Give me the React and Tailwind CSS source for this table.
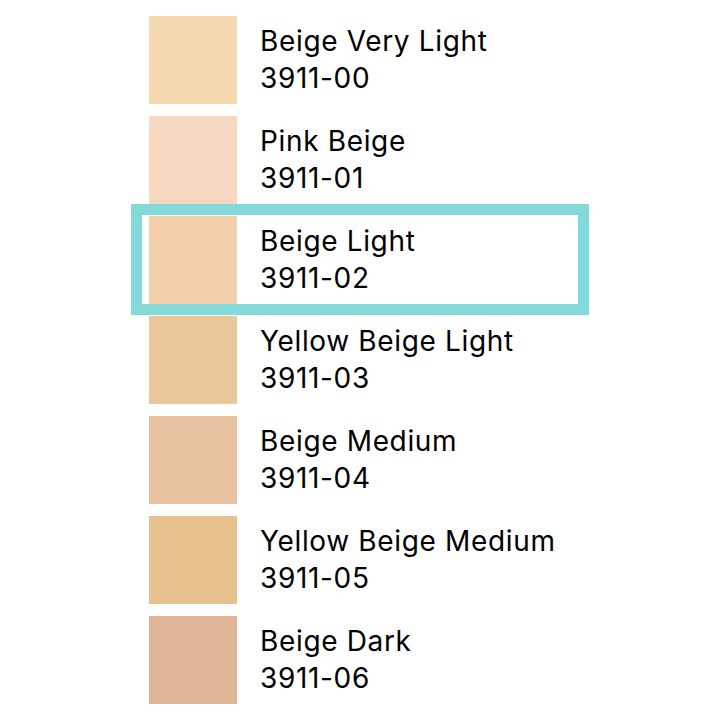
const shades = [
  { name: 'Beige Very Light', code: '3911-00', color: 'bg-[#f5d9b1]' },
  { name: 'Pink Beige', code: '3911-01', color: 'bg-[#f7d8c1]' },
  { name: 'Beige Light', code: '3911-02', color: 'bg-[#f3cfab]', selected: true },
  { name: 'Yellow Beige Light', code: '3911-03', color: 'bg-[#eac79b]' },
  { name: 'Beige Medium', code: '3911-04', color: 'bg-[#e9c2a1]' },
  { name: 'Yellow Beige Medium', code: '3911-05', color: 'bg-[#e6c08d]' },
  { name: 'Beige Dark', code: '3911-06', color: 'bg-[#e0b597]' },
];

export default function App() {
  return (
    <div className="w-[720px] h-[720px] bg-white pt-[16px] pl-[149px] font-['Inter',sans-serif] text-black">
      <div className="flex flex-col gap-[12px]">
        {shades.map((shade) => (
          <div key={shade.code} className="relative flex items-center gap-[23px] h-[88px]">
            {shade.selected && (
              <div className="absolute left-[-18px] top-[-12px] w-[458px] h-[111px] border-[11px] border-[#84d9db]" />
            )}
            <div className={`w-[88px] h-[88px] shrink-0 ${shade.color}`} />
            <div className="flex flex-col text-[28px] leading-[37px] tracking-[0.65px]">
              <span>{shade.name}</span>
              <span>{shade.code}</span>
            </div>
          </div>
        ))}
      </div>
    </div>
  );
}
